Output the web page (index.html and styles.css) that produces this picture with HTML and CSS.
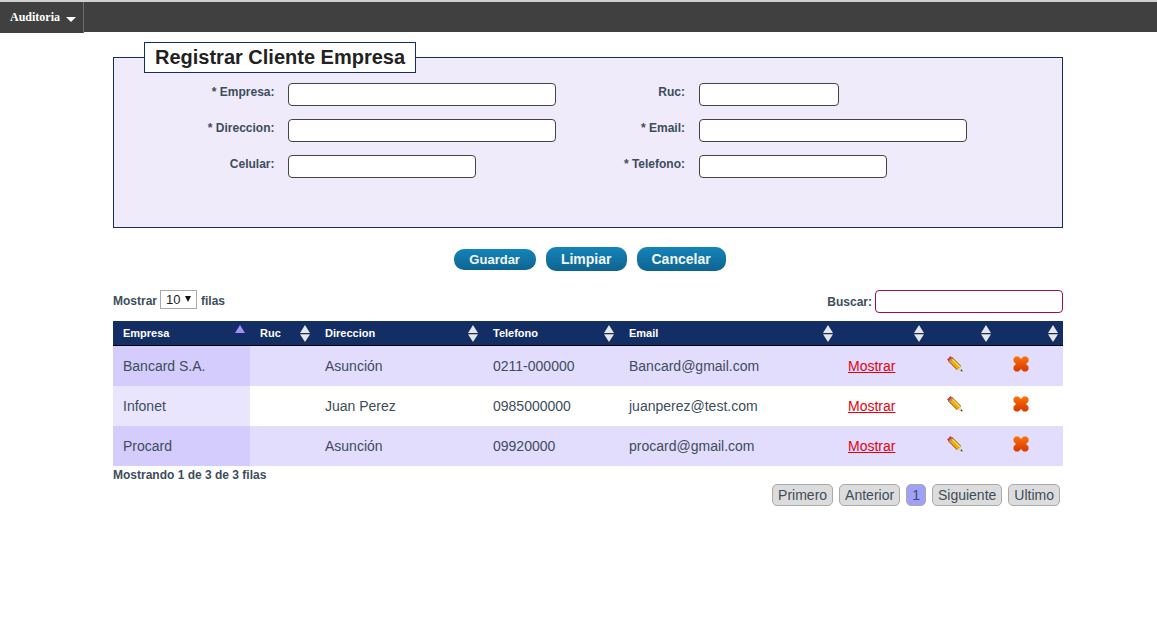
FILE: index.html
```html
<!DOCTYPE html>
<html lang="es">
<head>
    <meta charset="UTF-8">
    <title>Registrar Cliente Empresa</title>
    <link rel="stylesheet" href="styles.css">
</head>
<body>
    <svg class="defs" width="0" height="0">
        <defs>
            <linearGradient id="crossFill" x1="0" y1="0" x2="0" y2="1">
                <stop offset="0" stop-color="#fb7208"/>
                <stop offset="1" stop-color="#d83600"/>
            </linearGradient>
        </defs>
        <symbol id="sort" viewBox="0 0 10 17">
            <polygon points="5,0 10,8 0,8" fill="#e6e6e6"/>
            <polygon points="0,9.200 10,9.200 5,17" fill="#e6e6e6"/>
        </symbol>
        <symbol id="pencil" viewBox="0 0 16 16">
            <line x1="3" y1="3" x2="12" y2="12" stroke="#80601c" stroke-width="6"/>
            <line x1="3" y1="3" x2="12" y2="12" stroke="#f4a80a" stroke-width="4.400"/>
            <line x1="4.500" y1="2.500" x2="13" y2="11" stroke="#ffdc4a" stroke-width="1.200"/>
            <line x1="1.800" y1="1.800" x2="3.500" y2="3.500" stroke="#e2392f" stroke-width="5"/>
            <line x1="3.500" y1="3.500" x2="4.500" y2="4.500" stroke="#8d949c" stroke-width="5"/>
            <polygon points="15.500,15.500 10.500,14 14,10.500" fill="#ecd9ac"/>
            <polygon points="15.500,15.500 13.300,14.900 14.900,13.300" fill="#333"/>
        </symbol>
        <symbol id="cross" viewBox="0 0 16 16">
            <polygon points="2.500,0.500 5.500,0.500 8,3 10.500,0.500 13.500,0.500 15.500,2.500 15.500,5.500 13,8 15.500,10.500 15.500,13.500 13.500,15.500 10.500,15.500 8,13 5.500,15.500 2.500,15.500 0.500,13.500 0.500,10.500 3,8 0.500,5.500 0.500,2.500" fill="url(#crossFill)"/>
        </symbol>
    </svg>

    <nav class="menubar">
        <a class="menu-item" href="#">Auditoria <span class="caret"></span></a>
    </nav>

    <main class="content">
        <fieldset class="panel">
            <legend class="panel-title">Registrar Cliente Empresa</legend>
            <div class="form-grid">
                <label class="form-label label-left">* Empresa:</label>
                <div><input class="field field-lg" type="text"></div>
                <label class="form-label">Ruc:</label>
                <div><input class="field field-sm" type="text"></div>

                <label class="form-label label-left">* Direccion:</label>
                <div><input class="field field-lg" type="text"></div>
                <label class="form-label">* Email:</label>
                <div><input class="field field-lg" type="text"></div>

                <label class="form-label label-left">Celular:</label>
                <div><input class="field field-md" type="text"></div>
                <label class="form-label">* Telefono:</label>
                <div><input class="field field-md" type="text"></div>
            </div>
        </fieldset>

        <div class="actions">
            <button class="btn btn-small" type="button">Guardar</button>
            <button class="btn" type="button">Limpiar</button>
            <button class="btn" type="button">Cancelar</button>
        </div>

        <div class="table-tools">
            <div class="length">Mostrar
                <span class="length-wrap"><select class="length-select"><option>10</option></select></span>
                filas</div>
            <div class="search">Buscar: <input class="search-input" type="text"></div>
        </div>

        <table class="grid">
            <colgroup>
                <col class="c-empresa"><col class="c-ruc"><col class="c-dir"><col class="c-tel">
                <col class="c-email"><col class="c-show"><col class="c-edit"><col class="c-del">
            </colgroup>
            <thead>
                <tr>
                    <th>Empresa<svg class="sort-up" viewBox="0 0 10 8"><polygon points="5,0 10,8 0,8" fill="#a88cf6"/></svg></th>
                    <th>Ruc<svg class="sort"><use href="#sort"/></svg></th>
                    <th>Direccion<svg class="sort"><use href="#sort"/></svg></th>
                    <th>Telefono<svg class="sort"><use href="#sort"/></svg></th>
                    <th>Email<svg class="sort"><use href="#sort"/></svg></th>
                    <th><svg class="sort"><use href="#sort"/></svg></th>
                    <th><svg class="sort"><use href="#sort"/></svg></th>
                    <th><svg class="sort"><use href="#sort"/></svg></th>
                </tr>
            </thead>
            <tbody>
                <tr class="odd">
                    <td class="first">Bancard S.A.</td><td></td><td>Asunción</td><td>0211-000000</td><td>Bancard@gmail.com</td>
                    <td class="no-wrap"><a class="show-link" href="#">Mostrar</a></td>
                    <td><svg class="icon icon-edit"><use href="#pencil"/></svg></td>
                    <td><svg class="icon icon-del"><use href="#cross"/></svg></td>
                </tr>
                <tr class="even">
                    <td class="first">Infonet</td><td></td><td>Juan Perez</td><td>0985000000</td><td>juanperez@test.com</td>
                    <td class="no-wrap"><a class="show-link" href="#">Mostrar</a></td>
                    <td><svg class="icon icon-edit"><use href="#pencil"/></svg></td>
                    <td><svg class="icon icon-del"><use href="#cross"/></svg></td>
                </tr>
                <tr class="odd">
                    <td class="first">Procard</td><td></td><td>Asunción</td><td>09920000</td><td>procard@gmail.com</td>
                    <td class="no-wrap"><a class="show-link" href="#">Mostrar</a></td>
                    <td><svg class="icon icon-edit"><use href="#pencil"/></svg></td>
                    <td><svg class="icon icon-del"><use href="#cross"/></svg></td>
                </tr>
            </tbody>
        </table>

        <div class="info">Mostrando 1 de 3 de 3 filas</div>
        <div class="pager">
            <a class="page" href="#">Primero</a>
            <a class="page" href="#">Anterior</a>
            <a class="page current" href="#">1</a>
            <a class="page" href="#">Siguiente</a>
            <a class="page" href="#">Ultimo</a>
        </div>
    </main>
</body>
</html>
```

FILE: styles.css
```css
body{
    margin: 0;
    background: #fff;
    font-family: "Liberation Sans", Arial, sans-serif;
    color: #3d4d5a;
}
.defs{
    position: absolute;
}
.menubar{
    height: 30px;
    margin-top: 2px;
    background: #404040;
    box-shadow: 0 -2px 0 #d0d0d0;
}
.menu-item{
    display: inline-block;
    height: 31px;
    line-height: 30px;
    padding: 0 7px 0 10px;
    background: #404040;
    border-right: 1px solid #6b6b6b;
    font-family: "Liberation Serif", serif;
    font-size: 12px;
    font-weight: bold;
    color: #fff;
    text-decoration: none;
}
.caret{
    display: inline-block;
    margin-left: 3px;
    vertical-align: -1px;
    border-top: 5px solid #fff;
    border-left: 5px solid transparent;
    border-right: 5px solid transparent;
}
.content{
    width: 950px;
    margin-left: 113px;
}
.panel{
    height: 186px;
    margin: 10px 0 0;
    padding: 0;
    box-sizing: border-box;
    background: #efebfb;
    border: 1px solid #132d65;
}
.panel-title{
    margin-left: 30px;
    padding: 0 10px;
    height: 31px;
    box-sizing: border-box;
    line-height: 29px;
    background: #fff;
    border: 1px solid #132d65;
    font-size: 20px;
    font-weight: bold;
    color: #222;
}
.form-grid{
    display: grid;
    grid-template-columns: 174px 268px 143px 1fr;
    grid-auto-rows: 36px;
    padding-top: 10px;
}
.form-label{
    padding-right: 14px;
    padding-top: 2px;
    text-align: right;
    font-size: 12px;
    font-weight: bold;
}
.label-left{
    padding-right: 13.500px;
}
.field{
    display: block;
    height: 23px;
    padding: 0 4px;
    box-sizing: border-box;
    background: #fff;
    border: 1px solid #444;
    border-radius: 4px;
}
.field-lg{ width: 268px; }
.field-md{ width: 188px; }
.field-sm{ width: 140px; }
.actions{
    display: flex;
    justify-content: center;
    align-items: center;
    gap: 10px;
    margin-top: 19px;
    padding-left: 4px;
    height: 24px;
}
.btn{
    height: 24px;
    padding: 0 15px;
    background: linear-gradient(#1484bb, #0f648f);
    border: 0;
    border-radius: 10px;
    font-family: inherit;
    font-size: 14px;
    font-weight: bold;
    color: #f2f6f8;
}
.btn-small{
    height: 21px;
    padding: 0 16px 0 15px;
    font-size: 13px;
}
.table-tools{
    display: flex;
    justify-content: space-between;
    align-items: flex-start;
    height: 31px;
    margin-top: 19px;
    font-size: 12px;
    font-weight: bold;
}
.length{
    display: flex;
    align-items: center;
    gap: 3px;
    padding-top: 2px;
}
.length-wrap{
    position: relative;
    display: block;
    margin: -2px 1px 0 0;
}
.length-wrap::after{
    content: "";
    position: absolute;
    top: 6px;
    left: 25px;
    border-top: 6px solid #111;
    border-left: 3.500px solid transparent;
    border-right: 3.500px solid transparent;
}
.length-select{
    display: block;
    width: 37px;
    height: 19px;
    padding: 0 0 0 5px;
    appearance: none;
    background: #fff;
    border: 1px solid #aaa;
    border-radius: 0;
    font-family: inherit;
    font-size: 13px;
    color: #222;
}
.search{
    display: flex;
    align-items: center;
    gap: 3px;
}
.search-input{
    width: 188px;
    height: 23px;
    box-sizing: border-box;
    background: #fff;
    border: 1px solid #99104f;
    border-radius: 4px;
}
.grid{
    width: 950px;
    table-layout: fixed;
    border-collapse: collapse;
}
.c-empresa{ width: 137px; }
.c-ruc{ width: 65px; }
.c-dir{ width: 168px; }
.c-tel{ width: 136px; }
.c-email{ width: 219px; }
.c-show{ width: 91px; }
.c-edit{ width: 67px; }
.c-del{ width: 67px; }
.grid th{
    position: relative;
    height: 24px;
    padding: 0 10px;
    background: #132d65;
    border-bottom: 1px solid #000;
    text-align: left;
    font-size: 11px;
    font-weight: bold;
    color: #fff;
}
.sort{
    position: absolute;
    top: 4px;
    right: 5px;
    width: 10px;
    height: 17px;
}
.sort-up{
    position: absolute;
    top: 4px;
    right: 5px;
    width: 10px;
    height: 8px;
}
.grid td{
    height: 40px;
    padding: 0 10px;
    box-sizing: border-box;
    font-size: 14px;
}
.grid td.no-wrap{
    padding-right: 0;
    white-space: nowrap;
}
.odd td{ background: #e2dcfd; }
.odd td.first{ background: #d4ccfd; }
.even td{ background: #fff; }
.even td.first{ background: #eae5fe; }
.show-link{
    color: #e8000f;
}
.icon{
    display: block;
    width: 16px;
    height: 16px;
    margin-top: -4px;
}
.icon-edit{
    margin-left: 8px;
}
.icon-del{
    margin-left: 7px;
}
.info{
    margin-top: 2px;
    font-size: 12px;
    font-weight: bold;
}
.pager{
    display: flex;
    justify-content: flex-end;
    gap: 6px;
    margin: 2px 3px 0 0;
}
.page{
    height: 22px;
    line-height: 21px;
    padding: 0 5px;
    box-sizing: border-box;
    background: #dcdcdc;
    border: 1px solid #aaa;
    border-radius: 5px;
    font-size: 14px;
    color: #3d4d5a;
    text-decoration: none;
}
.current{
    background: #a0a0f8;
}
```
